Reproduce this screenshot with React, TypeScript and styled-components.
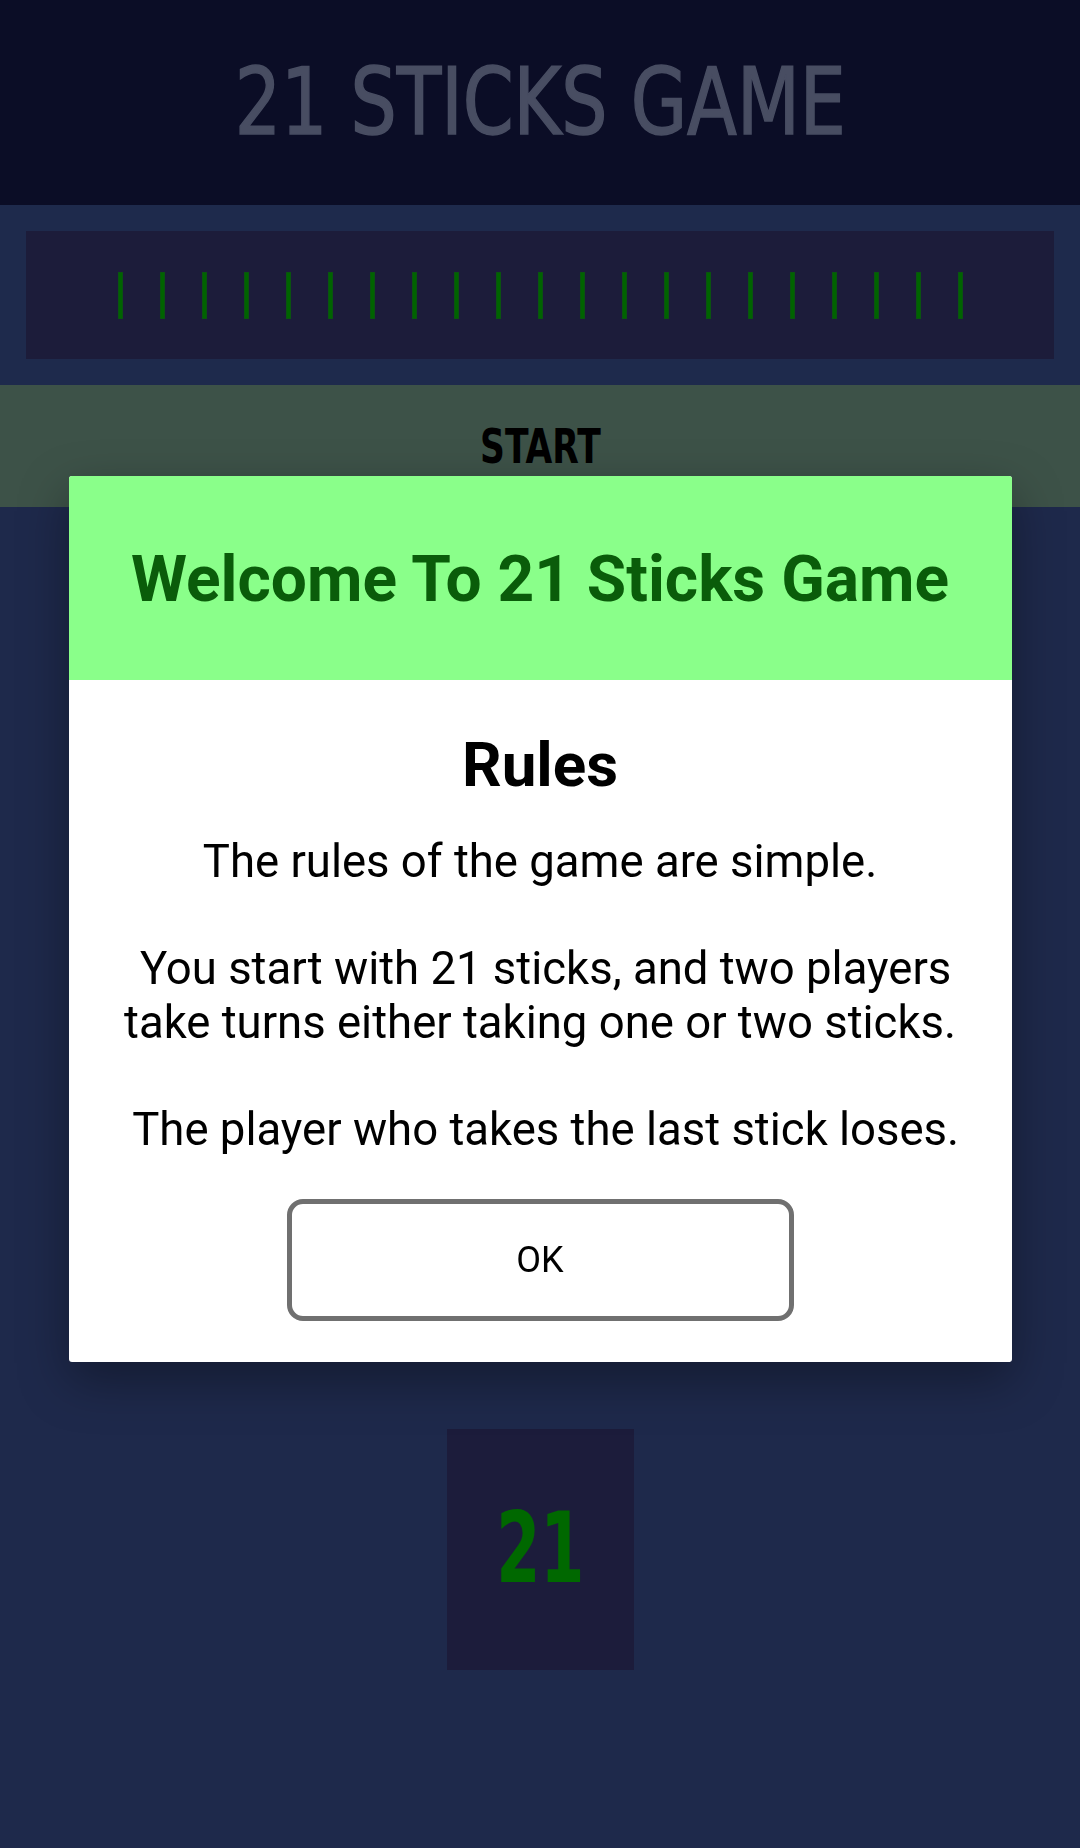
import React from "react";
import styled, { createGlobalStyle } from "styled-components";

const GlobalStyle = createGlobalStyle`
  html, body {
    margin: 0;
    padding: 0;
    background: #1e294b;
  }
  body {
    font-family: Roboto, "Noto Sans", sans-serif;
  }
  * { box-sizing: border-box; }
`;

const Page = styled.div`
  min-height: 1848px;
  background: #1e294b;
  display: flex;
  flex-direction: column;
`;

const Header = styled.header`
  height: 205px;
  background: #0b0d26;
  display: flex;
  align-items: center;
  justify-content: center;
`;

const HandFont = `"DejaVu Sans Condensed", "Liberation Sans", sans-serif`;

const Title = styled.h1`
  margin: 0;
  font-family: ${HandFont};
  font-weight: 400;
  font-size: 92px;
  line-height: 1;
  color: #484d62;
  transform: scaleX(0.88);
  -webkit-text-stroke: 1.5px #484d62;
`;

const SticksPanel = styled.section`
  background: #1e2a4c;
  padding: 26px;
`;

const SticksBox = styled.div`
  height: 128px;
  background: #1c1c3a;
  display: flex;
  align-items: center;
  justify-content: center;
  gap: 37px;
`;

const Stick = styled.span`
  display: block;
  width: 5px;
  height: 47px;
  background: #006400;
  box-shadow: inset 0 0 0 1px #0a5410;
`;

const StartButton = styled.button`
  height: 122px;
  width: 100%;
  border: none;
  background: #3d5248;
  display: flex;
  align-items: center;
  justify-content: center;
  padding: 0;
  cursor: pointer;
`;

const StartLabel = styled.span`
  font-family: ${HandFont};
  font-weight: 700;
  font-size: 48px;
  color: #000;
  transform: scaleX(0.8);
`;

const CountBox = styled.div`
  margin: 922px auto 0;
  width: 187px;
  height: 241px;
  background: #1c1c3b;
  display: flex;
  align-items: center;
  justify-content: center;
  padding-bottom: 4px;
`;

const CountValue = styled.span`
  font-family: ${HandFont};
  font-weight: 700;
  font-size: 98px;
  color: #006800;
  transform: scaleX(0.72);
`;

const Overlay = styled.div`
  position: fixed;
  inset: 0;
  display: flex;
  align-items: center;
  justify-content: center;
  padding-bottom: 10px;
`;

const Modal = styled.div`
  width: 943px;
  background: #fff;
  border-radius: 3px;
  overflow: hidden;
  box-shadow: 0 18px 50px rgba(0, 0, 0, 0.35);
`;

const ModalHeader = styled.div`
  height: 204px;
  background: #8aff8a;
  display: flex;
  align-items: center;
  justify-content: center;
  padding-top: 4px;
`;

const ModalTitle = styled.h2`
  margin: 0;
  font-family: Roboto, sans-serif;
  font-weight: 700;
  font-size: 64px;
  color: #0a5c0a;
`;

const ModalBody = styled.div`
  padding: 48px 40px 41px;
  display: flex;
  flex-direction: column;
  align-items: center;
`;

const RulesHeading = styled.h3`
  margin: 0;
  font-family: Roboto, sans-serif;
  font-weight: 700;
  font-size: 62px;
  color: #000;
`;

const RulesText = styled.p`
  margin: 34px 0 0;
  font-family: Roboto, sans-serif;
  font-size: 45.5px;
  line-height: 53.7px;
  color: #000;
  text-align: center;
  white-space: pre-wrap;
`;

const OkButton = styled.button`
  margin-top: 42px;
  width: 507px;
  height: 122px;
  background: #fff;
  border: 5px solid #707070;
  border-radius: 16px;
  font-family: Roboto, sans-serif;
  font-size: 36px;
  color: #000;
  cursor: pointer;
`;

const rules =
  "The rules of the game are simple.\n\n You start with 21 sticks, and two players take turns either taking one or two sticks.\n\n The player who takes the last stick loses.";

export default function App() {
  const sticks = Array.from({ length: 21 }, (_, i) => i);
  return (
    <>
      <GlobalStyle />
      <Page>
        <Header>
          <Title>21 STICKS GAME</Title>
        </Header>
        <SticksPanel>
          <SticksBox>
            {sticks.map((i) => (
              <Stick key={i} />
            ))}
          </SticksBox>
        </SticksPanel>
        <StartButton>
          <StartLabel>START</StartLabel>
        </StartButton>
        <CountBox>
          <CountValue>21</CountValue>
        </CountBox>
      </Page>
      <Overlay>
        <Modal>
          <ModalHeader>
            <ModalTitle>Welcome To 21 Sticks Game</ModalTitle>
          </ModalHeader>
          <ModalBody>
            <RulesHeading>Rules</RulesHeading>
            <RulesText>{rules}</RulesText>
            <OkButton>OK</OkButton>
          </ModalBody>
        </Modal>
      </Overlay>
    </>
  );
}
